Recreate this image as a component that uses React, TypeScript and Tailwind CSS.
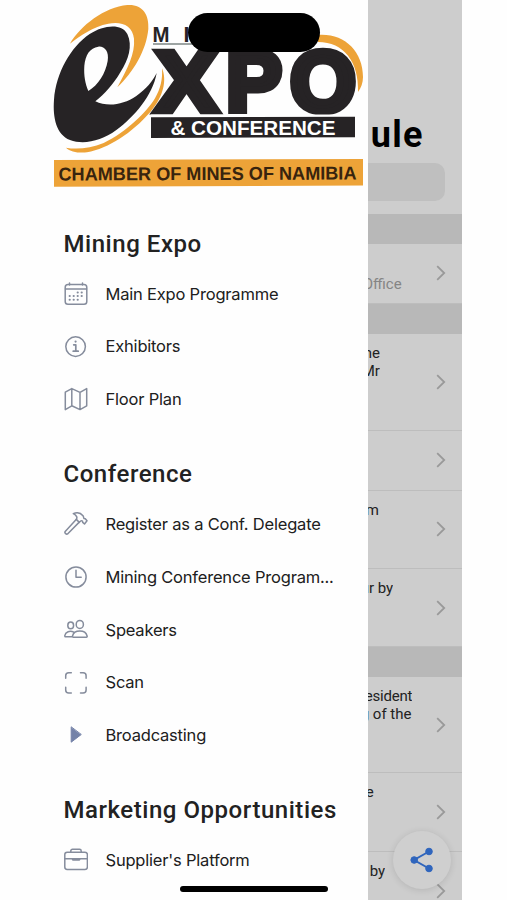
import type { ReactNode } from "react";

const icons: Record<string, ReactNode> = {
  calendar: (
    <>
      <rect x="1.2" y="2.6" width="21.6" height="19.6" rx="2.8" />
      <path d="M1.5 7h21M5.5 1v2M18.5 1v2" />
      <path
        d="M5.6 14h.2M9.6 14h.2M13.6 14h.2M17.6 14h.2M5.6 17.8h.2M9.6 17.8h.2M13.6 17.8h.2M13.6 10.4h.2M17.6 10.4h.2"
        strokeWidth="2"
      />
    </>
  ),
  info: (
    <>
      <circle cx="11.6" cy="11.6" r="9.8" />
      <path d="M9.7 9.8h2.1v6.2M9.2 16.2h5" strokeWidth="1.7" />
      <circle cx="11.6" cy="6.6" r="1.1" fill="currentColor" stroke="none" />
    </>
  ),
  map: <path d="M1.3 5.2 7.8 1.6l8.2 3.8 6.7-3.8v17.2L16 22.6l-8.2-3.8-6.5 3.8ZM7.8 1.6v17.2M16 5.4v17.2" />,
  hammer: (
    <>
      <path d="M12.4 7.3 1.2 19.4c-1 1.4.9 3.5 2.6 2.4L15 10.4" />
      <path d="M9.3 1.7C12.6.2 16.5.8 19 3.7c.7.9.5 2 1 2.8l1.3.3 1.7 2-2.5 3.2-1.8-1.6-.2-1.4c-1-.7-2.1-.2-3.2 1.4l-3-3c1.2-1.5.7-3.9-3-5.7Z" />
    </>
  ),
  clock: (
    <>
      <circle cx="12" cy="12" r="10.1" />
      <path d="M12 5.3v7h5.2" />
    </>
  ),
  people: (
    <>
      <ellipse cx="15.8" cy="6.4" rx="3.6" ry="4" />
      <ellipse cx="6.7" cy="7.4" rx="2.9" ry="3.3" />
      <path d="M9.3 19.3c-.7 0-1-.5-.8-1.3.8-3.1 3.7-4.9 7.3-4.9s6.5 1.8 7.3 4.9c.2.8-.1 1.3-.8 1.3ZM9.8 14.2c-3.9-2.1-8.4-.3-9 3.4-.1.7.2 1.2.9 1.2h6.5" />
    </>
  ),
  scan: <path d="M1.7 7.3V4.7c0-2 1-3 3-3h2.6M16.5 1.7h2.6c2 0 3 1 3 3v2.6M22.1 16.3V19c0 2-1 3-3 3h-2.6M7.3 22H4.7c-2 0-3-1-3-3v-2.7" />,
  play: <path d="M7.2 4.2v15L17 11.7Z" fill="#7482a8" stroke="#7482a8" strokeWidth="1" />,
  briefcase: (
    <>
      <rect x="0.8" y="4.2" width="22.6" height="17.2" rx="2.4" />
      <path d="M6.8 4V3c0-1 .7-1.7 1.7-1.7h7c1 0 1.7.7 1.7 1.7v1M1 10.7h22.2M8.2 10.8l.6 1.2h6.6l.6-1.2" />
    </>
  ),
};

const sections = [
  {
    title: "Mining Expo",
    items: [
      { icon: "calendar", label: "Main Expo Programme" },
      { icon: "info", label: "Exhibitors" },
      { icon: "map", label: "Floor Plan" },
    ],
  },
  {
    title: "Conference",
    items: [
      { icon: "hammer", label: "Register as a Conf. Delegate" },
      { icon: "clock", label: "Mining Conference Program..." },
      { icon: "people", label: "Speakers" },
      { icon: "scan", label: "Scan" },
      { icon: "play", label: "Broadcasting" },
    ],
  },
  {
    title: "Marketing Opportunities",
    items: [{ icon: "briefcase", label: "Supplier's Platform" }],
  },
];

function Logo() {
  return (
    <svg
      viewBox="46 0 322 195.5"
      className="h-[195.5px] w-[322px] shrink-0"
      fontFamily="'Liberation Sans', Arial, sans-serif"
      fontWeight="700"
    >
      <g transform="scale(.33333) translate(120 0)">
        <path
          fill="#eda338"
          d="M90 131C120 78 195 20 262 15c45-3 66 28 63 72-6 65-46 130-93 175 30-56 54-101 50-146-4-40-38-53-77-45-45 8-86 37-115 60Z"
        />
        <path
          fill="#eda338"
          d="M366 205c15 35 5 85-35 131-55 63-125 109-190 121-25 3-50-2-63-14 33 6 73 2 113-14 69-33 129-93 154-134 17-30 23-57 21-90Z"
        />
        <path
          fill="#262325"
          fillRule="evenodd"
          d="M350 219c-12 68-67 131-122 172-43 31-96 45-138 29-41-17-52-66-48-121 6-80 50-158 107-197 40-26 95-34 113 0 17 36 3 78-20 113-24 41-48 66-76 89 36 17 84 11 123-16 30-21 49-45 61-69ZM145 273c29-17 52-53 58-90 5-29-10-45-28-43-25 3-39 25-42 57-2 30 3 54 12 76Z"
        />
      </g>
      <path
        fill="#eda338"
        d="M318 35c26-2 45 16 45 42 0 6-2 11-5 15 1-30-14-50-40-50Z"
      />
      <text x="152.5" y="42" fontSize="21.5" fill="#262325" textLength="17" lengthAdjust="spacingAndGlyphs">M</text>
      <text x="183.5" y="42" fontSize="21.5" fill="#262325">I</text>
      <path d="M153 44h48" stroke="#3c4a48" strokeWidth="1.2" />
      <g fill="#262325" stroke="#262325" strokeWidth="7">
        <text x="155.5" y="110.5" fontSize="86" textLength="62" lengthAdjust="spacingAndGlyphs">X</text>
        <text x="226" y="110.5" fontSize="86" textLength="56" lengthAdjust="spacingAndGlyphs">P</text>
        <text x="290" y="110.7" fontSize="86" textLength="66" lengthAdjust="spacingAndGlyphs">O</text>
      </g>
      <path fill="#fefefe" d="M151 114.4h190v2.6H151Z" />
      <path fill="#262325" d="M151 117.3 355 116.8V137.2L151 138Z" />
      <text x="170.5" y="134.5" fontSize="20" fill="#fff" textLength="165" lengthAdjust="spacingAndGlyphs">
        &amp; CONFERENCE
      </text>
      <path fill="#eda338" d="m54 160 309-1v26.5l-309 1.3Z" />
      <text
        x="58.5"
        y="180.5"
        fontSize="18.5"
        fill="#38240e"
        textLength="298"
        lengthAdjust="spacingAndGlyphs"
        transform="rotate(-.2 58 180)"
      >
        CHAMBER OF MINES OF NAMIBIA
      </text>
    </svg>
  );
}

function Drawer() {
  return (
    <aside className="flex w-[321.7px] shrink-0 flex-col overflow-hidden bg-[#fefefe]">
      <Logo />
      {sections.map((section) => (
        <section key={section.title} className="shrink-0">
          <h2 className="h-18 pt-8 pl-[17.5px] font-['Roboto',sans-serif] text-[24px] leading-8 font-medium tracking-[0.54px] whitespace-nowrap text-[#222]">
            {section.title}
          </h2>
          {section.items.map((item) => (
            <div key={item.label} className="flex h-[52.8px] items-center gap-[18px] pl-[17.5px]">
              <svg
                viewBox="0 0 24 24"
                className="size-6 shrink-0 text-[#858c9c]"
                fill="none"
                stroke="currentColor"
                strokeWidth="1.5"
                strokeLinecap="round"
                strokeLinejoin="round"
              >
                {icons[item.icon]}
              </svg>
              <span className="font-['Inter',sans-serif] text-[16.5px] tracking-[-0.2px] whitespace-nowrap text-[#202020]">
                {item.label}
              </span>
            </div>
          ))}
        </section>
      ))}
    </aside>
  );
}

function Row({ className, children }: { className: string; children?: ReactNode }) {
  return (
    <div className={`flex shrink-0 items-center justify-between border-b border-[#bdbdbd] pr-4 ${className}`}>
      <div className="flex h-full flex-col overflow-hidden pt-[10px] font-['Roboto',sans-serif] text-[15px] leading-[18px] whitespace-nowrap text-[#222]">
        {children}
      </div>
      <svg viewBox="0 0 10 16" className="h-4 w-2.5 shrink-0" fill="none" stroke="#999" strokeWidth="1.8">
        <path d="m1.2 1.2 7 6.8-7 6.8" />
      </svg>
    </div>
  );
}

function Band({ className }: { className: string }) {
  return <div className={`shrink-0 bg-[#b8b8b8] ${className}`} />;
}

function Schedule() {
  return (
    <main className="flex w-[94px] shrink-0 flex-col overflow-hidden bg-[#cdcdcd]">
      <header className="flex h-[213.5px] shrink-0 flex-col pt-[113px]">
        <h1 className="pl-[3px] font-['Roboto',sans-serif] text-[36px] leading-[44px] font-bold tracking-[1.3px] text-black">
          ule
        </h1>
        <div className="mt-[6px] h-[38px] w-[77px] rounded-r-[10px] bg-[#bfbfbf]" />
      </header>
      <Band className="h-[30px]" />
      <Row className="h-[60px]">
        <span className="-ml-[5px] pt-[21px] text-[#858585]">Office</span>
      </Row>
      <Band className="h-[30.5px]" />
      <Row className="h-[96.5px]">
        <span className="-ml-[4px]">he</span>
        <span className="-ml-[6px]">Mr</span>
      </Row>
      <Row className="h-[60px]" />
      <Row className="h-[78.5px]">
        <span className="-ml-[2px]">m</span>
      </Row>
      <Row className="h-[78px]">
        <span className="-ml-[7px]">ur by</span>
      </Row>
      <Band className="h-[30px]" />
      <Row className="h-[96px]">
        <span className="-ml-[3px] tracking-[-0.2px]">esident</span>
        <span className="-ml-[7px]">g of the</span>
      </Row>
      <Row className="h-[79px]">
        <span className="-ml-[2px]">e</span>
      </Row>
      <Row className="h-[78px]">
        <span className="pl-[2px]">by</span>
      </Row>
    </main>
  );
}

export default function App() {
  return (
    <div className="relative flex h-[900px] w-[507px] overflow-hidden bg-[#fefefe] pl-[46px]">
      <Drawer />
      <Schedule />

      {/* Dynamic island */}
      <div className="absolute top-[12.5px] left-[188px] h-[39px] w-[132px] rounded-full bg-black" />

      {/* Share button */}
      <button
        aria-label="Share"
        className="absolute top-[831px] left-[393px] flex size-[58px] items-center justify-center rounded-full bg-[#cfcfcf] shadow-[0_1px_7px_rgba(0,0,0,0.12)]"
      >
        <svg viewBox="0 0 24 26" className="h-[26px] w-6" fill="#2f65bd" stroke="#2f65bd">
          <path d="M19 4.5 4 13l15 8.5" fill="none" strokeWidth="2" />
          <circle cx="19" cy="4.5" r="3.3" />
          <circle cx="4.2" cy="13" r="3.3" />
          <circle cx="19" cy="21.5" r="3.3" />
        </svg>
      </button>

      {/* Home indicator */}
      <div className="absolute top-[886px] left-[180px] h-[6px] w-[148px] rounded-full bg-black" />
    </div>
  );
}
